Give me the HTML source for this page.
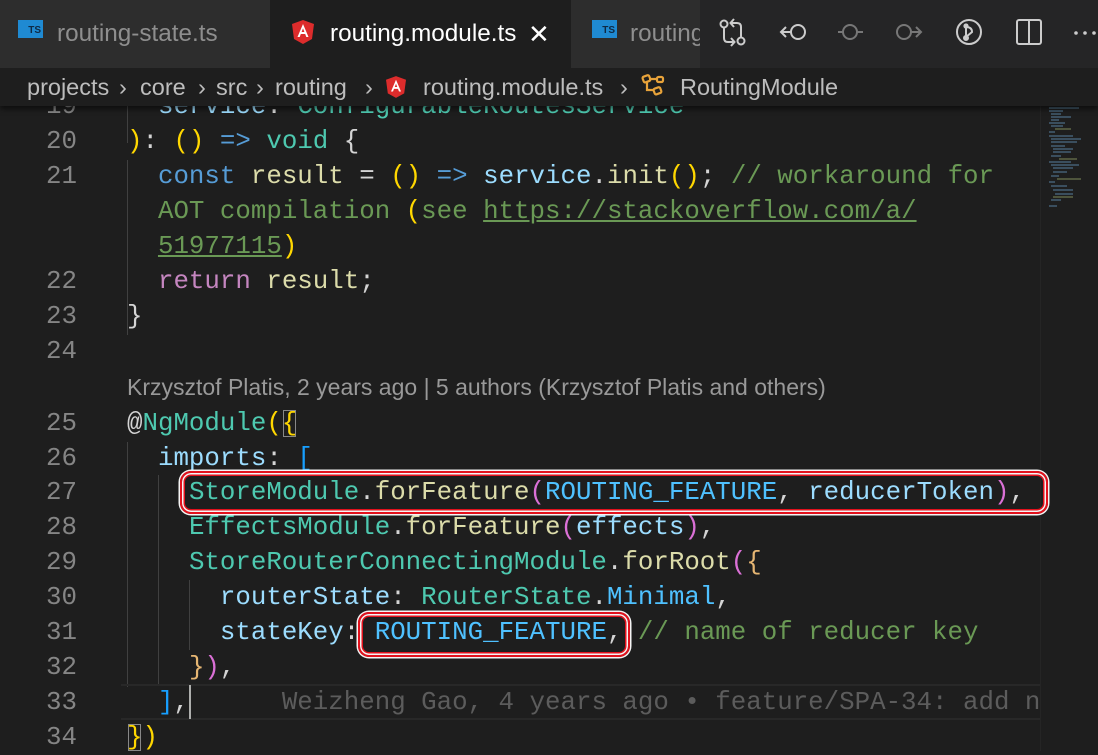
<!DOCTYPE html>
<html><head><meta charset="utf-8"><style>
*{margin:0;padding:0;box-sizing:border-box}
body{width:1098px;height:751px;background:#1e1e1e;overflow:hidden;position:relative;font-family:"Liberation Sans",sans-serif}
.tabbar{position:absolute;left:0;top:0;width:1098px;height:68px;background:#252526;z-index:6}
.tab{position:absolute;top:0;height:68px;background:#2d2d2d;color:#8e8e8e;font-size:24.3px;line-height:68px;white-space:nowrap;overflow:hidden}
.ts{position:absolute;top:20px;width:25px;height:18px;background:#1f8ad2;color:#0e2a45;font-size:10px;font-weight:bold;line-height:10px;text-align:right;padding:6px 2px 0 0}
.crumb{position:absolute;left:0;top:68px;width:1098px;height:38px;background:#1e1e1e;color:#bdbdbd;font-size:23.5px;line-height:38px;z-index:5;box-shadow:0 3px 5px #0008;white-space:nowrap}
.crumb span{position:absolute}
.ln{position:absolute;left:0;width:77px;text-align:right;color:#858585;font-family:"Liberation Mono",monospace;font-size:25.8px;line-height:35px}
.l{position:absolute;left:127px;font-family:"Liberation Mono",monospace;font-size:25.8px;line-height:35px;white-space:pre;color:#d4d4d4;z-index:2}
.k{color:#569cd6}.p{color:#c586c0}.v{color:#9cdcfe}.f{color:#dcdcaa}.c{color:#4ec9b0}.cm{color:#6a9955}.g{color:#ffd700}.pk{color:#da70d6}.b{color:#179fff}.cn{color:#4fc1ff}
.u{text-decoration:underline}
.guide{position:absolute;width:1px;background:#404040}
.box{position:absolute;border:2px solid #e3111c;border-radius:11px;box-shadow:0 0 0 1.5px #f4f4f4,inset 0 0 0 1.5px #f4f4f4,inset 0 0 0 3px #e3111c;z-index:4}
.minimap{position:absolute;left:1040px;top:106px;width:58px;height:645px;background:#1e1e1e;border-left:1px solid #252525;z-index:3}
</style></head><body>
<div class="tabbar">
  <div class="tab" style="left:0;width:270px"><div class="ts" style="left:18px">TS</div><span style="position:absolute;left:57px">routing-state.ts</span></div>
  <div class="tab" style="left:270px;width:301px;background:#1e1e1e;color:#fff">
    <svg style="position:absolute;left:22px;top:20px" width="22" height="24" viewBox="0 0 22 24"><path d="M11 0L22 4 20 19 11 24 2 19 0 4z" fill="#dd2c2c"/><path d="M11 4L5.5 17h2.2l1.1-3h4.4l1.1 3h2.2zM9.6 12L11 8.4 12.4 12z" fill="#fff"/></svg>
    <span style="position:absolute;left:60px">routing.module.ts</span><span style="position:absolute;left:258px;font-size:26px">✕</span></div>
  <div class="tab" style="left:571px;width:129px"><div class="ts" style="left:21px">TS</div><span style="position:absolute;left:59px">routing.module.ts</span></div>
  <svg style="position:absolute;left:710px;top:10px" width="388" height="46" viewBox="710 10 388 46" fill="none" stroke="#cccccc" stroke-width="2">
    <circle cx="724" cy="24" r="3.5"/><circle cx="741" cy="41" r="3.5"/><path d="M724 28v10q0 4 4 4h6M731 38l3.5 4-3.5 4M741 37V27q0-4-4-4h-6M734 19l-3.5 4 3.5 4"/>
    <circle cx="798" cy="32" r="7"/><path d="M791 32h-9M786 27l-5 5 5 5"/>
    <g stroke="#777"><circle cx="850" cy="32" r="7"/><path d="M838 32h5M857 32h6"/></g>
    <g stroke="#777"><circle cx="904" cy="32" r="7"/><path d="M911 32h9M916 27l5 5-5 5"/></g>
    <circle cx="969" cy="32" r="12"/><path d="M966 25v14M966 27q6 0 6 5l-6 5" /><circle cx="966" cy="38" r="2" fill="#ccc"/><circle cx="966" cy="26" r="1.6" fill="#ccc"/>
    <rect x="1017" y="20" width="24" height="24" rx="2"/><path d="M1029 20v24"/>
    <g fill="#ccc" stroke="none"><circle cx="1076" cy="33" r="1.8"/><circle cx="1085" cy="33" r="1.8"/><circle cx="1094" cy="33" r="1.8"/></g>
  </svg>
</div>
<div class="crumb">
<span style="left:27px">projects</span><span style="left:119px">›</span>
<span style="left:140px">core</span><span style="left:198px">›</span>
<span style="left:216px">src</span><span style="left:256px">›</span>
<span style="left:275px">routing</span><span style="left:365px">›</span>
<svg style="position:absolute;left:386px;top:8px" width="20" height="22" viewBox="0 0 22 24"><path d="M11 0L22 4 20 19 11 24 2 19 0 4z" fill="#dd2c2c"/><path d="M11 4L5.5 17h2.2l1.1-3h4.4l1.1 3h2.2zM9.6 12L11 8.4 12.4 12z" fill="#fff"/></svg>
<span style="left:423px">routing.module.ts</span><span style="left:620px">›</span>
<svg style="position:absolute;left:640px;top:5px" width="28" height="28" viewBox="0 0 28 28" fill="none" stroke="#e8a33a" stroke-width="2.2"><rect x="3" y="3" width="7" height="6" rx="1.5" transform="rotate(-20 6 6)"/><path d="M7 9v8h6M9 6h8"/><rect x="17" y="4" width="6" height="5" rx="1.5"/><rect x="14" y="15" width="7" height="6" rx="1.5" transform="rotate(-20 17 18)"/></svg>
<span style="left:680px">RoutingModule</span></div>

<div class="guide" style="left:127px;top:106px;height:37px"></div>
<div class="guide" style="left:127px;top:160px;height:175px"></div>
<div class="guide" style="left:127px;top:442px;height:245px"></div>
<div class="guide" style="left:158px;top:475px;height:210px"></div>
<div class="guide" style="left:189px;top:580px;height:70px"></div>

<div style="position:absolute;left:121px;top:684px;width:919px;height:36px;border-top:2px solid #282828;border-bottom:2px solid #282828"></div>
<div style="position:absolute;left:189px;top:685px;width:2px;height:34px;background:#aeafad;z-index:3"></div>

<div class="ln" style="top:89px">19</div><div class="l" style="top:89px">  <span class="v">service</span>: <span class="c">ConfigurableRoutesService</span></div>
<div class="ln" style="top:124px">20</div><div class="l" style="top:124px"><span class="g">)</span>: <span class="g">()</span> <span class="k">=&gt;</span> <span class="c">void</span> {</div>
<div class="ln" style="top:159px">21</div><div class="l" style="top:159px">  <span class="k">const</span> <span class="f">result</span> = <span class="g">()</span> <span class="k">=&gt;</span> <span class="v">service</span>.<span class="f">init</span><span class="g">()</span>; <span class="cm">// workaround for</span></div>
<div class="l" style="top:194px">  <span class="cm">AOT compilation </span><span class="g">(</span><span class="cm">see <span class="u">https://stackoverflow.com/a/</span></span></div>
<div class="l" style="top:229px">  <span class="cm u">51977115</span><span class="g">)</span></div>
<div class="ln" style="top:264px">22</div><div class="l" style="top:264px">  <span class="p">return</span> <span class="f">result</span>;</div>
<div class="ln" style="top:299px">23</div><div class="l" style="top:299px">}</div>
<div class="ln" style="top:334px">24</div>
<div style="position:absolute;left:127px;top:374px;color:#999;font-size:23px;white-space:nowrap">Krzysztof Platis, 2 years ago | 5 authors (Krzysztof Platis and others)</div>
<div class="ln" style="top:406px">25</div><div class="l" style="top:406px">@<span class="c">NgModule</span><span class="g">(</span><span class="g" style="outline:1px solid #888;outline-offset:-2px">{</span></div>
<div class="ln" style="top:441px">26</div><div class="l" style="top:441px">  <span class="v">imports</span>: <span class="b">[</span></div>
<div class="ln" style="top:475px">27</div><div class="l" style="top:475px">    <span class="c">StoreModule</span>.<span class="f">forFeature</span><span class="pk">(</span><span class="cn">ROUTING_FEATURE</span>, <span class="v">reducerToken</span><span class="pk">)</span>,</div>
<div class="ln" style="top:510px">28</div><div class="l" style="top:510px">    <span class="c">EffectsModule</span>.<span class="f">forFeature</span><span class="pk">(</span><span class="v">effects</span><span class="pk">)</span>,</div>
<div class="ln" style="top:545px">29</div><div class="l" style="top:545px">    <span class="c">StoreRouterConnectingModule</span>.<span class="f">forRoot</span><span class="pk">(</span><span style="color:#e6b673">{</span></div>
<div class="ln" style="top:580px">30</div><div class="l" style="top:580px">      <span class="v">routerState</span>: <span class="c">RouterState</span>.<span class="cn">Minimal</span>,</div>
<div class="ln" style="top:615px">31</div><div class="l" style="top:615px">      <span class="v">stateKey</span>: <span class="cn">ROUTING_FEATURE</span>, <span class="cm">// name of reducer key</span></div>
<div class="ln" style="top:650px">32</div><div class="l" style="top:650px">    <span style="color:#e6b673">}</span><span class="pk">)</span>,</div>
<div class="ln" style="top:685px">33</div><div class="l" style="top:685px;width:913px;overflow:hidden">  <span class="b">]</span>,      <span style="color:#5c5c5c">Weizheng Gao, 4 years ago • feature/SPA-34: add n</span></div>
<div class="ln" style="top:720px">34</div><div class="l" style="top:720px"><span class="g" style="outline:1px solid #888;outline-offset:-2px">}</span><span class="g">)</span></div>

<div class="box" style="left:180px;top:471px;width:868px;height:43px"></div>
<div class="box" style="left:358px;top:612px;width:272px;height:45px"></div>

<div class="minimap">
<svg width="58" height="120" viewBox="0 0 58 120" style="position:absolute;left:6px;top:0"><g stroke-width="1.2" opacity="0.6">
<path d="M2 2h30M2 5h14M4 8h10M4 11h20M4 14h8M2 17h16M4 20h12M2 26h6M2 30h24M4 33h30M4 36h26M4 40h14M6 43h20M6 46h18M4 50h10M2 56h22M4 59h28M6 62h20M6 66h14M4 70h8M2 76h6M4 80h16M6 84h20M8 88h18M4 94h10M2 100h8" stroke="#6aa0c8"/>
<path d="M8 23h16M12 53h18M10 73h24M6 91h20" stroke="#a0b070"/></g></svg>
</div>
</body></html>
